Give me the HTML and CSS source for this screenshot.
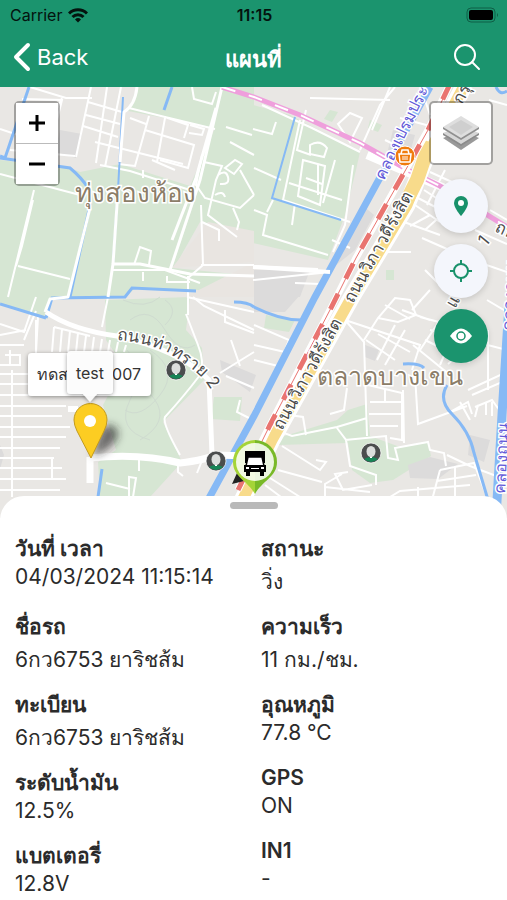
FILE: index.html
```
<!DOCTYPE html>
<html lang="th">
<head>
    <meta charset="UTF-8">
    <meta name="viewport" content="width=device-width, initial-scale=1.0">
    <title>แผนที่</title>
    <link rel="stylesheet" href="styles.css">
</head>
<body>
    <header class="header">
        <div class="status">
            <div class="carrier">
                <span>Carrier</span>
                <svg width="20" height="15" viewBox="0 0 20 15" fill="none" stroke="#04130e" stroke-width="3">
                    <path d="M1 5.5a12.7 12.7 0 0 1 18 0"/>
                    <path d="M4.500 9a7.800 7.800 0 0 1 11 0"/>
                    <path d="M10 14.500l-3-3a4.300 4.300 0 0 1 6 0z" fill="#04130e" stroke="none"/>
                </svg>
            </div>
            <span class="clock">11:15</span>
            <svg class="battery" width="33" height="16" viewBox="0 0 33 16">
                <rect x="1" y="1" width="28" height="14" rx="4" fill="none" stroke="#0f5f46"/>
                <rect x="3" y="3" width="24" height="10" rx="2" fill="#000"/>
                <path d="M31 6v4q2-2 0-4z" fill="#0f5f46"/>
            </svg>
        </div>
        <nav class="nav">
            <a class="back" href="#">
                <svg width="18" height="30" viewBox="0 0 18 30" fill="none" stroke="#fff" stroke-width="4" stroke-linecap="round" stroke-linejoin="round"><path d="M15 3L3 15l12 12"/></svg>
                <span>Back</span>
            </a>
            <h1 class="title">แผนที่</h1>
            <button type="button" class="search" aria-label="ค้นหา">
                <svg width="28" height="28" viewBox="0 0 28 28" fill="none" stroke="#fff" stroke-width="2" stroke-linecap="round"><circle cx="12" cy="12" r="10"/><path d="M19 19l7 7"/></svg>
            </button>
        </nav>
    </header>

    <main class="map">
        <svg class="canvas" viewBox="0 87 507 431" preserveAspectRatio="xMidYMid slice">
            <defs>
                <path id="thasai" d="M117 340Q153 342 177 358T209 387"/>
                <filter id="soft" x="-50%" y="-50%" width="200%" height="200%"><feGaussianBlur stdDeviation="4"/></filter>
                <filter id="drop" x="-20%" y="-20%" width="140%" height="150%"><feDropShadow dx="0" dy="1" stdDeviation="2" flood-opacity=".4"/></filter>
                <linearGradient id="leaf"><stop offset=".5" stop-color="#a5d437"/><stop offset=".5" stop-color="#79b928"/></linearGradient>
                <g id="park">
                    <circle r="10" fill="#4b4d4e" stroke="#fff" stroke-opacity=".7"/>
                    <path d="M-7 6Q0 2 7 6Q0 12-7 6z" fill="#178557"/>
                    <path d="M-1 5h2V1h-2z" fill="#fff"/>
                    <ellipse cy="-1.500" rx="4.500" ry="5.500" fill="#dcdedd"/>
                </g>
            </defs>

            <rect y="87" width="507" height="431" fill="#e9e7e4"/>

            <!-- parks -->
            <g fill="#d6e6d3">
                <path d="M0 160L70 168L80 172L120 164L190 186L215 128L165 118L128 111L137 87H222L254 87V232L200 222L174 268L254 276V292L135 288L125 298H0z"/>
                <path d="M0 298H50L44 318L0 303z"/>
                <path d="M105 300L190 297L186 330L202 348L204 380L163 422L182 462L150 497H100L98 462L116 450L103 405L124 366L106 340z"/>
                <path d="M214 397H242L240 421L211 419z"/>
                <path d="M253 105L290 115L360 152L356 170L345 215L328 260L253 243z"/>
                <path d="M370 120l12 5-4 7-10-4zM266 315L295 320L289 332L264 328zM330 110l8 2-6 10-8-3zM386 270h8v10h-8z"/>
                <path d="M278 438L337 420L348 410L367 404L370 436L400 447L428 441L431 456L393 480L370 483L352 470L348 443L278 445z"/>
            </g>
            <path d="M185 297H254V262L172 268L208 222L254 231V262z" fill="#e9e5e1"/>
            <g fill="#dcdbdb">
                <path d="M60 130L82 134L76 158L55 152zM220 360L256 375L250 392L222 372z"/>
                <path d="M254 295H300L285 312H254zM355 250L374 215L362 205L330 270zM393 130L415 135L408 160L388 150zM254 270H310L300 297H254z"/>
                <path d="M430 457L458 464L438 479L410 478L408 465zM470 435L490 440L484 462L468 455zM365 345l14 5-4 11-10-4zM0 445l4 10-4 14z"/>
            </g>

            <!-- small streets -->
            <g fill="none" stroke="#fff" stroke-width="2">
                <path d="M30 87L66 98L92 98M91 87L76 157M107 87L96 163M121 87L105 167M88 102L122 112M86 115L120 124M83 126L118 137M95 142L183 164M100 165L130 171L190 190M0 129L18 135M22 99L62 100L57 120M31 110L50 116"/>
                <path d="M10 150L75 156M0 174L80 195M34 190L8 297M33 200L22 246L16 266M18 266L70 279M62 98L52 120"/>
                <path d="M129 108L165 117L215 129M149 116L135 166L118 164M165 118L157 162M145 130L194 145L188 168L160 160M130 118L146 124M165 117L188 125L184 138M190 125l14 4-2 6-13-2M152 160L175 170M143 178v-8M192 87l2 12 18 5 4-12M226 127l26 8M230 142L254 155"/>
                <path d="M204 162L222 166L216 180L208 215L237 237M202 155L196 185L205 198L240 208L254 195M225 168l10-8 7 4-8 10zM240 170l14 25M233 208l6 14-2 8M218 175q8-6 10 2t-8 7M215 195q8-5 10 2M201 205L203 265L188 278M201 265H254M202 222L219 230V241"/>
                <path d="M134 265L140 247L151 251L149 265M112 270H165L200 283M143 272v9M188 276V315M187 297L254 312M167 276v6H190"/>
                <path d="M253 129L272 134L276 122M262 105L312 128L360 152M300 120L283 200L350 222M353 165L345 225L333 252M360 150L380 105L395 87M338 124L350 113L362 118L350 142zM310 98L390 100M390 87L372 130M254 168L281 180M289 183L342 200M306 110L297 150L311 155M303 160L325 166L320 205L298 196zM310 145q10-6 17 3l-3 9-14-3zM318 165v30M306 178L322 184M335 160L323 203M295 203l-3 22M254 210L267 215L263 235L328 255M267 212l6-12"/>
                <path d="M253 266L318 269M253 280L330 272M295 283L320 284M332 240L350 248M372 252H411M422 238L456 253M385 140L414 154M400 140l8-22M400 118L430 126M410 226L430 215M404 222L440 235M418 198L445 212L425 230M424 190L447 205M415 205L440 222M430 172L465 188"/>
                <path d="M254 325L289 340L270 387L254 410M254 345L285 352M254 360L278 366M36 297l-12 35-24-8M36 311L24 340M0 345H24M0 365H20V355H5M36 320V365M10 350V365M0 335L26 330M101 297L108 297L102 327M193 297L204 306L254 330M225 310v12L254 333M231 340L240 366M220 373L254 352M226 376L254 388M240 400l-3 12 14 7"/>
                <path d="M54 327L52 352M62 329L60 352M70 331L68 352M78 333L76 352M86 336L84 352M94 337L92 352M102 339L100 352M110 340L108 352M118 342L116 352M126 345L124 352M54 327L90 336M38 317L36 352M12 370V497M0 374H66M0 384H66M0 395H74M0 406H66M0 416H62M0 427H70M0 437H66M0 448H60M0 458H54M0 468H62M0 479H66M0 490H60M52 458V479"/>
                <path d="M139 455v16M178 460v12l5 4M203 458l-6 15M129 497V477L136 478L133 497M106 483L130 489M186 314L198 345Q205 362 200 375Q185 395 165 417Q162 423 180 455"/>
                <path d="M345 320L364 342L367 436M364 340L378 318L395 298L410 300L416 315L398 322L378 318M345 320L420 345L412 370M385 305L410 319M366 340L395 360M378 334L410 352M395 325L377 360M405 330L385 365M368 385L402 393V440L390 438M385 390V403M370 402H402M369 414H402M370 426H398M403 390L404 443M347 388L344 410L330 414M276 430L292 436L337 427L367 418M289 415L303 417L306 435M337 428L346 440L350 466L376 475V485M345 440L386 436L388 458L398 460L395 448L428 442L430 450L444 453L446 466"/>
                <path d="M420 317L450 325L470 345L448 364M425 340L470 362M430 330L507 350M440 320L420 350M455 330L440 365M413 345L450 375M488 330V390M487 300L507 312M402 310L430 320M415 375L418 424L467 406M450 412L468 402L472 414M460 402l10 18M472 395L507 380M468 390L507 372M475 407L492 400L500 411M478 405l-3 12M486 403v12M492 402v14M447 455L470 466L507 480M440 470L474 463L490 505M437 481L476 475M390 497L400 491L470 485M440 470L432 500M418 487V500M455 466V500M348 472L335 474L343 490L372 485M342 474L325 484V497M325 487L370 492M282 446L320 470L326 462L316 460M278 470L322 482M270 478L300 497M265 485L285 500"/>
                <path d="M425 270L440 285M425 100L430 115M489 100L507 105M445 170L427 205M475 230L507 244M490 210L507 220M472 260L507 272M430 290L412 310"/>
            </g>
            <g fill="none" stroke="#cfdbd0" stroke-width="1">
                <path d="M123 300Q145 310 160 297M130 320Q150 305 165 330T195 345M127 350Q145 370 130 400T150 440M150 350Q180 370 160 395T125 410M120 385Q140 378 155 400T140 440M165 300Q180 310 165 325"/>
            </g>

            <!-- water -->
            <g fill="none" stroke="#86b9f5" stroke-width="3">
                <path d="M29 87L5 158L0 156M0 158L70 168Q82 178 88 188L90 205L70 297"/>
                <path d="M123 97L118 190L113 263" stroke-width="2"/>
                <path d="M172 87L164 110M46 318L52 298L125 297L132 288L196 291M0 304L46 318M102 469L98 497M254 307Q280 320 301 320M234 302Q248 302 254 307"/>
                <path d="M295 117L272 198L341 220" stroke-width="2"/>
                <path d="M496 87Q500 96 507 91M403 364Q420 363 424 368M447 385Q438 400 452 414Q470 432 474 453L488 500"/>
                <path d="M430 87L377 183L315 297L254 416L208 500" stroke-width="7"/>
                <path d="M509 305L502 415L496 518" stroke-width="9"/>
            </g>

            <!-- larger streets -->
            <g fill="none" stroke="#fff" stroke-linejoin="round">
                <path d="M118 190L113 264H140L190 274L254 276M113 264L108 297" stroke-width="3"/>
                <path d="M90 208L68 297L50 299L45 312" stroke-width="3"/>
                <path d="M46 312Q72 330 117 336Q180 350 209 380L212 455" stroke-width="5"/>
                <path d="M90 457V483" stroke-width="7"/>
                <path d="M68 409H78" stroke-width="6"/>
                <path d="M90 458Q140 453 180 463Q205 460 215 455L250 456" stroke-width="7"/>
                <path d="M222 87L200 180L170 270M216 108L196 178L172 240" stroke-width="3"/>
                <path d="M137 87Q135 105 124 112L120 162" stroke-width="3"/>
                <path d="M253 267L330 272" stroke-width="4"/>
                <path d="M367 155L432 183L450 190" stroke-width="8"/>
            </g>

            <!-- metro line -->
            <path d="M222 87L254 97L300 115L360 143L408 170L440 186L507 227" fill="none" stroke="#ef9fdc" stroke-width="5"/>
            <path d="M222 87L254 97L300 115L360 143L408 170L440 186L507 227" fill="none" stroke="#fff" stroke-width="2" stroke-dasharray="14 14"/>

            <!-- highway and railway -->
            <path d="M465 84L425 160L407 205L350 300L272 440L240 505" fill="none" stroke="#fff" stroke-width="17"/>
            <path d="M465 84L425 160L407 205L350 300L272 440L240 505" fill="none" stroke="#f8db8b" stroke-width="11"/>
            <path d="M430 142L417 180L407 200" fill="none" stroke="#f8db8b" stroke-width="14"/>
            <path d="M450 84L428 130L400 180L356 258L331 308L270 425L238 490" fill="none" stroke="#fff" stroke-width="7"/>
            <path d="M450 84L428 130L400 180L356 258L331 308L270 425L238 490" fill="none" stroke="#e97470" stroke-width="1"/>
            <path d="M450 84L428 130L400 180L356 258L331 308L270 425L238 490" fill="none" stroke="#e97470" stroke-width="5" stroke-dasharray="17 17"/>

            <!-- place names -->
            <g class="road-name">
                <text transform="translate(353 304) rotate(-61)">ถนนวิภาวดีรังสิต</text>
                <text transform="translate(282 431) rotate(-61)">ถนนวิภาวดีรังสิต</text>
                <text transform="translate(462 105) rotate(-62)">กรุง</text>
                <text transform="translate(455 309) rotate(-60)">แจ้</text>
                <text transform="translate(486 247) rotate(-50)">1</text>
                <text transform="translate(494 231) rotate(25)">ถน</text>
                <text><textPath href="#thasai">ถนนท่าทราย 2</textPath></text>
            </g>
            <g class="canal-name">
                <text transform="translate(384 181) rotate(-64)">คลองเปรมประชา</text>
                <text transform="translate(505 494) rotate(-87)">คลองถนน</text>
                <text transform="translate(513 331) rotate(-87)">คลองถนน</text>
            </g>
            <g class="district">
                <text x="75" y="202">ทุ่งสองห้อง</text>
                <text x="317" y="385" class="small">ตลาดบางเขน</text>
            </g>

            <g fill="#fff" stroke="#fff">
                <circle cx="405" cy="156" r="10" fill="#f07c0e"/>
                <path d="M399 154h12l-1 8h-10zM401 154l1-4h6l1 4" fill="none" stroke-width="1.500"/>
                <path d="M403 156v4M405 156v4M407 156v4"/>
            </g>
            <use href="#park" x="176" y="370"/>
            <use href="#park" x="216" y="461"/>
            <use href="#park" x="371" y="453"/>

            <!-- vehicle -->
            <path d="M232 484l5-11 7 8z" fill="#222"/>
            <path d="M255 440a22 22 0 0 1 22 22c0 15-15 19-22 32c-7-13-22-17-22-32a22 22 0 0 1 22-22z" fill="url(#leaf)"/>
            <circle cx="255" cy="462" r="19" fill="#fff" fill-opacity=".85"/>
            <g>
                <path d="M245 451h20v12h-20z"/>
                <path d="M248 457h14l2 9h-18z" fill="#fff" stroke="#000" stroke-width="1.500"/>
                <path d="M244 465h22v7h-22z"/>
                <path d="M246 472h4v4h-4zM260 472h4v4h-4z"/>
                <path d="M246 467h3v2h-3zM261 467h3v2h-3zM251 468h8v1h-8z" fill="#fff"/>
            </g>

            <!-- marker with its tooltips -->
            <path d="M92 456L103 426Q118 422 118 436Q112 450 92 456z" fill="#222" fill-opacity=".65" filter="url(#soft)"/>
            <path d="M91 458L77 431Q74 425 74 420a16.500 16.500 0 0 1 33 0Q107 425 104 431z" fill="#fccd22" stroke="#c39b1d"/>
            <circle cx="90" cy="421" r="6" fill="#fff"/>
            <g class="tip">
                <rect x="28" y="353" width="123" height="43" rx="4" fill="#fff" filter="url(#drop)"/>
                <text x="37" y="380">ทดส</text>
                <text x="141" y="380" text-anchor="end">007</text>
                <path d="M71 351h38a4 4 0 0 1 4 4v35a4 4 0 0 1-4 4H97l-7 8-7-8H71a4 4 0 0 1-4-4V355a4 4 0 0 1 4-4z" fill="#fff" fill-opacity=".93" filter="url(#drop)"/>
                <text x="90" y="379" text-anchor="middle">test</text>
            </g>
        </svg>

        <div class="controls">
            <div class="zoom">
                <button type="button" aria-label="ขยาย"><svg width="18" height="18" viewBox="0 0 18 18" stroke="#000" stroke-width="3"><path d="M1 9h16M9 1v16"/></svg></button>
                <button type="button" aria-label="ย่อ"><svg width="18" height="18" viewBox="0 0 18 18" stroke="#000" stroke-width="3"><path d="M1 9h16"/></svg></button>
            </div>
            <div class="tools">
                <button type="button" class="layers" aria-label="ชั้นแผนที่">
                    <svg width="38" height="36" viewBox="0 0 38 36">
                        <path d="M1 23l18 12 18-12-5-2-13 8-13-8z" fill="#999"/>
                        <path d="M1 18l18 12 18-12-5-2-13 8-13-8z" fill="#d6d6d6"/>
                        <path d="M1 18l18 11 18-11v2L19 31 1 20z" fill="#8b8b8b"/>
                        <path d="M1 12L19 1l18 11-18 12z" fill="#dedede"/>
                        <path d="M7 12L19 5l12 7-12 8z" fill="#cfcfcf"/>
                        <path d="M1 12l18 11 18-11v2L19 25 1 14z" fill="#8f8f8f"/>
                    </svg>
                </button>
                <div class="rounds">
                    <button type="button" class="round" aria-label="ตำแหน่ง">
                        <svg width="16" height="22" viewBox="0 0 16 22"><path d="M8 1a7 7 0 0 0-7 7c0 5 7 13 7 13s7-8 7-13a7 7 0 0 0-7-7z" fill="#18916a"/><circle cx="8" cy="8" r="3" fill="#fff"/></svg>
                    </button>
                    <button type="button" class="round" aria-label="ตำแหน่งของฉัน">
                        <svg width="22" height="22" viewBox="0 0 22 22" fill="none" stroke="#18916a" stroke-width="2"><circle cx="11" cy="11" r="7"/><path d="M11 0v5M11 17v5M0 11h5M17 11h5"/></svg>
                    </button>
                    <button type="button" class="round active" aria-label="แสดง">
                        <svg width="24" height="16" viewBox="0 0 24 16"><path d="M1 8Q12-7 23 8Q12 23 1 8z" fill="#fff"/><circle cx="12" cy="8" r="4" fill="none" stroke="#18916a" stroke-width="1.500"/></svg>
                    </button>
                </div>
            </div>
        </div>
    </main>

    <section class="sheet">
        <div class="handle"></div>
        <dl class="info">
            <div><dt class="th">วันที่ เวลา</dt><dd>04/03/2024 11:15:14</dd></div>
            <div><dt class="th">สถานะ</dt><dd class="th">วิ่ง</dd></div>
            <div><dt class="th">ชื่อรถ</dt><dd class="th">6กว6753 ยาริชส้ม</dd></div>
            <div><dt class="th">ความเร็ว</dt><dd class="th">11 กม./ชม.</dd></div>
            <div><dt class="th">ทะเบียน</dt><dd class="th">6กว6753 ยาริชส้ม</dd></div>
            <div><dt class="th">อุณหภูมิ</dt><dd>77.8 °C</dd></div>
            <div><dt class="th">ระดับน้ำมัน</dt><dd>12.5%</dd></div>
            <div><dt>GPS</dt><dd>ON</dd></div>
            <div><dt class="th">แบตเตอรี่</dt><dd>12.8V</dd></div>
            <div><dt>IN1</dt><dd>-</dd></div>
        </dl>
    </section>
</body>
</html>
```

FILE: styles.css
```
*{
    margin: 0;
    padding: 0;
    box-sizing: border-box;
}
body{
    min-height: 100vh;
    display: flex;
    flex-direction: column;
    font-family: Inter, "Noto Sans", sans-serif;
    color: #2b2b2b;
    background-color: #fff;
}
button{
    display: flex;
    align-items: center;
    justify-content: center;
    border: none;
    background-color: #fff;
    cursor: pointer;
}
svg{
    display: block;
}

/* header */
.header{
    background-color: #1b946e;
}
.status{
    display: grid;
    grid-template-columns: 1fr auto 1fr;
    align-items: center;
    height: 30px;
    padding: 0 8px 0 10px;
    font-size: 16px;
    color: #04130e;
}
.carrier{
    display: flex;
    align-items: center;
    gap: 6px;
}
.clock{
    font-weight: 600;
    font-size: 16px;
}
.battery{
    justify-self: end;
}
.nav{
    display: grid;
    grid-template-columns: 1fr auto 1fr;
    align-items: center;
    height: 57px;
    padding: 0 13px 3px;
    color: #fff;
}
.back{
    display: flex;
    align-items: center;
    gap: 6px;
    font-size: 22px;
    color: #fff;
    text-decoration: none;
}
.title{
    padding-top: 4px;
    font-size: 22px;
    font-weight: 600;
    line-height: 32px;
}
.search{
    justify-self: end;
    padding-right: 13px;
    background: none;
}

/* map */
.map{
    position: relative;
    flex: 1;
    min-height: 320px;
}
.canvas{
    position: absolute;
    width: 100%;
    height: 100%;
}
.road-name{
    font-size: 17px;
    fill: #4c4c4c;
    stroke: #fff;
    stroke-width: 3px;
    paint-order: stroke;
}
.canal-name{
    font-size: 16px;
    fill: #6259d8;
    stroke: #fff;
    stroke-width: 3px;
    paint-order: stroke;
}
.district{
    font-size: 26px;
    fill: #8b7d68;
    stroke: #fff;
    stroke-width: 3px;
    paint-order: stroke;
}
.small{
    font-size: 25px;
}
.tip{
    font-size: 16px;
    fill: #333;
}
.controls{
    position: relative;
    display: flex;
    justify-content: space-between;
    align-items: flex-start;
    padding: 14px;
}
.zoom{
    border: 2px solid rgba(0,0,0,0.3);
    border-radius: 5px;
    background-clip: padding-box;
}
.zoom button{
    width: 42px;
    height: 40px;
}
.zoom button:first-child{
    height: 41px;
    border-bottom: 1px solid #bbb;
}
.tools{
    display: flex;
    flex-direction: column;
    align-items: center;
    gap: 14px;
}
.layers{
    width: 64px;
    height: 64px;
    border: 2px solid rgba(0,0,0,0.3);
    border-radius: 5px;
    background-clip: padding-box;
}
.rounds{
    display: flex;
    flex-direction: column;
    gap: 11px;
}
.round{
    width: 54px;
    height: 54px;
    border-radius: 50%;
    background-color: #f4f6fc;
    box-shadow: 0 2px 6px rgba(0,0,0,0.15);
}
.active{
    background-color: #1b946e;
}

/* bottom sheet */
.sheet{
    position: relative;
    margin-top: -22px;
    padding: 6px 15px 2px;
    border-radius: 24px 24px 0 0;
    background-color: #fff;
}
.handle{
    width: 48px;
    height: 7px;
    margin: 0 auto 21px;
    border-radius: 4px;
    background-color: #b9b9b9;
}
.info{
    display: grid;
    grid-template-columns: 1fr 1fr;
    gap: 12px 15px;
    font-size: 21px;
    line-height: 28px;
}
dt{
    font-weight: 600;
}
/* thai lines need room above for the vowels and tone marks */
.th{
    padding-top: 5px;
}
```
